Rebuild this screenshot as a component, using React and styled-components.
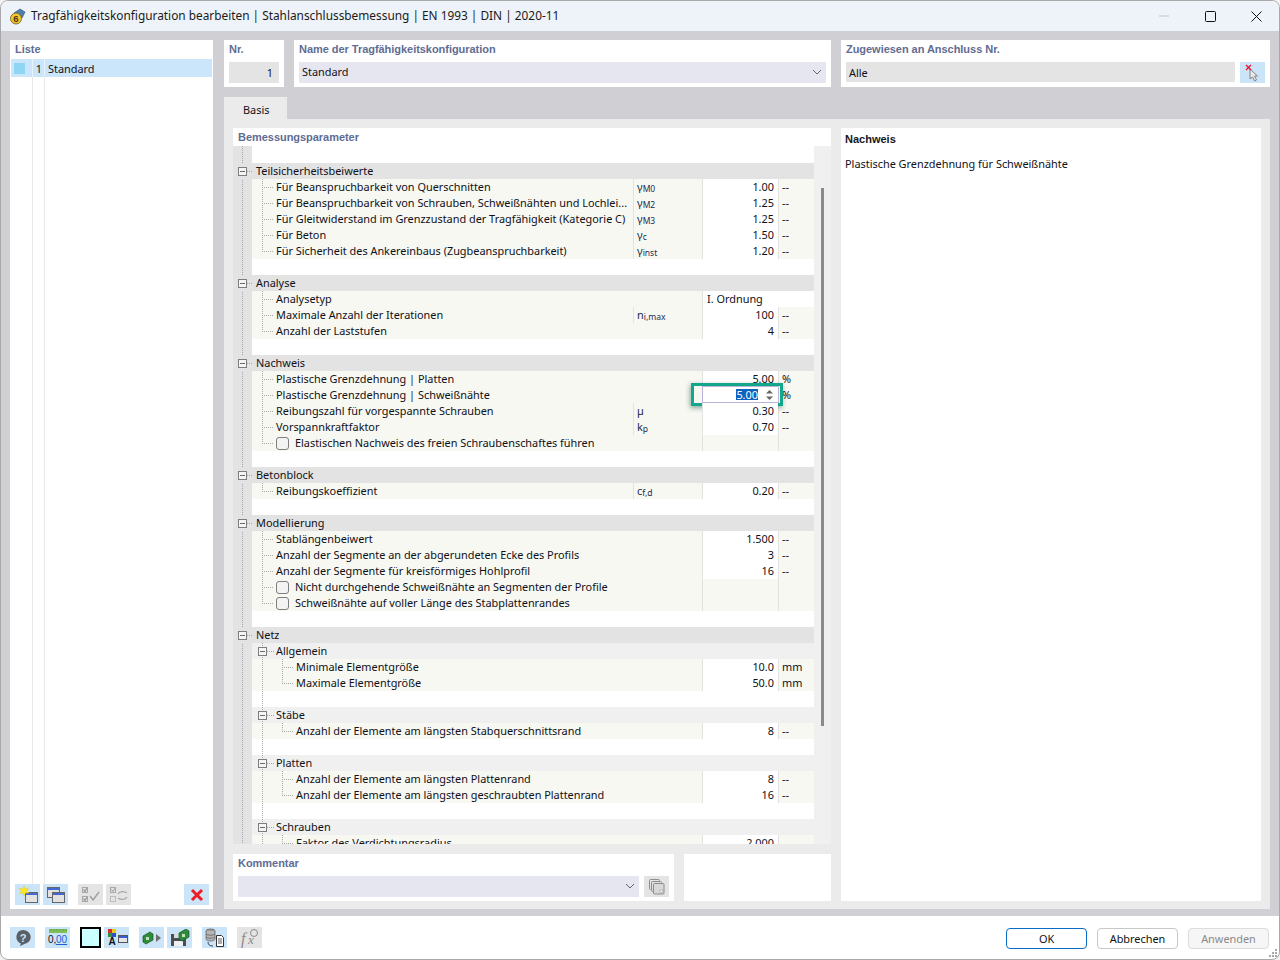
import React from 'react';
import styled, { createGlobalStyle } from 'styled-components';

const GlobalStyle = createGlobalStyle`
  html, body { margin: 0; padding: 0; height: 100%; background: #f2f2f2; }
  body { font-family: "Noto Sans", "Liberation Sans", sans-serif; font-size: 10.9px; color: #101018; }
  * { box-sizing: border-box; }
`;

const Win = styled.div`
  position: relative;
  width: 1280px;
  height: 960px;
  border: 1px solid #a9a9a9;
  border-radius: 8px;
  overflow: hidden;
  display: flex;
  flex-direction: column;
  background: #fff;
`;

const TitleBar = styled.div`
  height: 30px;
  flex: none;
  background: #eef3f9;
  display: flex;
  align-items: center;
  padding-left: 8px;
`;

const Title = styled.div`
  font-size: 11.85px;
  color: #1a1a1a;
  flex: 1;
  margin-left: 5px;
  padding-bottom: 2px;
`;

const WinBtn = styled.div`
  width: 46px;
  height: 30px;
  display: flex;
  align-items: center;
  justify-content: center;
`;

const Main = styled.div`
  flex: 1;
  min-height: 0;
  background: #d0cfd4;
  display: flex;
  gap: 11px;
  padding: 9px 9px 7px;
`;

const Panel = styled.div`
  background: #fff;
`;

const Heading = styled.div`
  font-family: "Liberation Sans", sans-serif;
  font-size: 11px;
  font-weight: 700;
  letter-spacing: -0.04px;
  color: #5f6c93;
  height: 18px;
  line-height: 19px;
  padding-left: 5px;
`;

const ListPanel = styled(Panel)`
  width: 203px;
  flex: none;
  display: flex;
  flex-direction: column;
`;

const ListHead = styled(Heading)`
  height: 19px;
`;

const ListBody = styled.div`
  flex: 1;
  margin: 0 1px;
  background:
    linear-gradient(#e8e8e8, #e8e8e8) 21px 0 / 1px 100% no-repeat,
    linear-gradient(#e8e8e8, #e8e8e8) 33px 0 / 1px 100% no-repeat;
`;

const ListRow = styled.div`
  height: 18px;
  background:
    linear-gradient(#e8f3fc, #e8f3fc) 21px 0 / 1px 100% no-repeat,
    linear-gradient(#e8f3fc, #e8f3fc) 33px 0 / 1px 100% no-repeat,
    #cbe6fb;
  display: flex;
  align-items: center;
  padding-left: 3px;
`;

const Swatch = styled.span`
  width: 11px;
  height: 11px;
  background: #8fd6f5;
`;

const ListNo = styled.span`
  width: 17px;
  text-align: right;
  margin-right: 6px;
`;

const ListTools = styled.div`
  height: 25px;
  flex: none;
  display: flex;
  padding-left: 5px;
`;

const IconBtn = styled.div`
  width: 25px;
  height: 21px;
  flex: none;
  margin-left: ${(p) => p.$gap ?? 0}px;
  background: ${(p) => (p.$off ? '#e4e4e4' : '#cbe4f8')};
  display: flex;
  align-items: center;
  justify-content: center;
`;

const Right = styled.div`
  flex: 1;
  min-width: 0;
  display: flex;
  flex-direction: column;
`;

const TopRow = styled.div`
  display: grid;
  grid-template-columns: 60px 537px 429px;
  gap: 10px;
  height: 47px;
  flex: none;
`;

const FieldRow = styled.div`
  display: flex;
  gap: 5px;
  padding: 4px 5px 0;
`;

const Field = styled.div`
  flex: 1;
  height: ${(p) => p.$h ?? 21}px;
  background: ${(p) => (p.$edit ? '#e6e6f0' : '#e4e4e4')};
  display: flex;
  align-items: center;
  justify-content: ${(p) => (p.$end ? 'flex-end' : 'space-between')};
  padding: 0 ${(p) => (p.$end ? 6 : 4)}px ${(p) => (p.$edit ? 2 : 0)}px 3px;
`;

const Tabs = styled.div`
  height: 22px;
  margin-top: 10px;
  flex: none;
`;

const Tab = styled.div`
  width: 63px;
  height: 22px;
  background: #ebebeb;
  line-height: 25px;
  padding-left: 19px;
`;

const TabBody = styled.div`
  flex: 1;
  min-height: 0;
  background: #ebebeb;
  padding: 9px 9px 8px;
  display: flex;
  gap: 10px;
`;

const LeftCol = styled.div`
  width: 598px;
  flex: none;
  display: flex;
  flex-direction: column;
  gap: 10px;
`;

const ParamPanel = styled(Panel)`
  flex: 1;
  min-height: 0;
  display: flex;
  flex-direction: column;
`;

const TreeWrap = styled.div`
  flex: 1;
  min-height: 0;
  display: flex;
`;

const Tree = styled.div`
  flex: 1;
  min-width: 0;
  overflow: hidden;
  background:
    repeating-linear-gradient(to bottom, #a8a8a8 0 1px, transparent 1px 2px) 9px 0 / 1px 100% no-repeat,
    linear-gradient(#e3e3e3, #e3e3e3) 0 0 / 19px 100% no-repeat;
  padding-top: 17px;
`;

const Track = styled.div`
  width: 17px;
  flex: none;
  background: #f0f0f0;
  padding: 42px 0 0 7px;
`;

const Thumb = styled.div`
  width: 3px;
  height: 538px;
  background: #8a8a8a;
`;

const Row = styled.div`
  height: 16px;
  display: flex;
  background: ${(p) => p.$bg || 'transparent'};
  line-height: 16px;
  white-space: nowrap;
`;

const Gutter = styled.div`
  width: 19px;
  flex: none;
  display: flex;
  align-items: center;
  background: repeating-linear-gradient(to right, #a8a8a8 0 1px, transparent 1px 2px) 14px 8px / ${(p) => (p.$dash ? 6 : 0)}px 1px no-repeat;
`;

const Toggle = styled.span`
  width: 9px;
  height: 9px;
  margin-left: ${(p) => p.$left}px;
  flex: none;
  border: 1px solid #7d7d7d;
  background: linear-gradient(#6a6a6a, #6a6a6a) center / 5px 1px no-repeat, #f4f4f4;
`;

const Cells = styled.div`
  flex: 1;
  display: grid;
  grid-template-columns: 381px 69px 76px 36px;
  grid-template-rows: 16px;
  background: #f7f8f2;
`;

const SubBody = styled.div`
  flex: 1;
  display: flex;
  background: #f0f0f0;
`;

const LabelCell = styled.div`
  display: flex;
  align-items: center;
  overflow: hidden;
  min-width: 0;
`;

const HeadLabel = styled(LabelCell)`
  padding-left: 4px;
`;

const Branch = styled.span`
  flex: none;
  height: 16px;
  width: ${(p) => p.$w}px;
  display: flex;
  align-items: center;
  background: ${(p) => p.$lines};
`;

const SymCell = styled.div`
  padding-left: 3px;
  color: #1c2a50;
  border-left: 1px solid ${(p) => (p.$line ? '#e2e2e2' : 'transparent')};
  & sub {
    font-size: 8.5px;
    line-height: 0;
    vertical-align: baseline;
    position: relative;
    top: 1px;
  }
`;

const ValCell = styled.div`
  position: relative;
  text-align: right;
  padding-right: 4px;
  background: ${(p) => (p.$empty ? 'transparent' : '#fff')};
  border-left: 1px solid #e2e2e2;
`;

const UnitCell = styled.div`
  padding-left: 3px;
  border-left: 1px solid #e2e2e2;
`;

const WideVal = styled.div`
  grid-column: 3 / 5;
  background: #fff;
  padding-left: 4px;
  border-left: 1px solid #e2e2e2;
`;

const CheckBox = styled.span`
  width: 13px;
  height: 13px;
  flex: none;
  margin-right: 6px;
  border: 1px solid #7f7f7f;
  border-radius: 3px;
  background: #f3f3f3;
`;

// Eingabefeld mit Markierung, liegt ueber der Wertespalte
const SpinInput = styled.div`
  position: absolute;
  inset: -1px -1px 0 -1px;
  border: 1px solid #b9b5da;
  background: #fff;
  display: flex;
  align-items: center;
  justify-content: flex-end;
  padding-right: 20px;
`;

const Selected = styled.span`
  background: #0a63c0;
  color: #fff;
  line-height: 11px;
  height: 11px;
  display: block;
`;

const Spin = styled.svg`
  position: absolute;
  right: 5px;
  top: 3px;
`;

const Marker = styled.div`
  position: absolute;
  left: -12px;
  right: -5px;
  top: -4px;
  bottom: -4px;
  border: 3px solid #12a68a;
  box-shadow: -1px 2px 5px rgba(10, 70, 50, 0.45);
  pointer-events: none;
`;

const BottomRow = styled.div`
  display: flex;
  gap: 10px;
  height: 47px;
  flex: none;
`;

const CommentPanel = styled(Panel)`
  width: 441px;
  flex: none;
`;

const EmptyPanel = styled(Panel)`
  flex: 1;
`;

const InfoPanel = styled(Panel)`
  flex: 1;
  padding: 4px;
`;

const InfoTitle = styled.div`
  font-family: "Liberation Sans", sans-serif;
  font-size: 11px;
  font-weight: 700;
  color: #16161e;
  line-height: 14px;
  margin-bottom: 10px;
`;

const Footer = styled.div`
  height: 43px;
  flex: none;
  display: flex;
  align-items: flex-start;
  padding: 11px 10px 0 9px;
`;

const ColorBox = styled.div`
  width: 21px;
  height: 21px;
  flex: none;
  margin-left: ${(p) => p.$gap}px;
  margin-right: 3px;
  border: 2px solid #000;
  background: #ccffff;
`;

const Spacer = styled.div`
  flex: 1;
`;

const DlgBtn = styled.div`
  width: 81px;
  height: 21px;
  margin-top: 1px;
  margin-left: ${(p) => p.$gap ?? 0}px;
  border: 1px solid ${(p) => (p.$primary ? '#0a6cc4' : p.$off ? '#dcdcdc' : '#c8c8c8')};
  border-radius: 4px;
  background: ${(p) => (p.$off ? '#f6f6f6' : '#fff')};
  color: ${(p) => (p.$off ? '#8a8a8a' : '#111')};
  text-align: center;
  line-height: 19px;
`;

const Grip = styled.svg`
  position: absolute;
  right: 2px;
  bottom: 1px;
`;

const Chevron = () => (
  <svg width="10" height="6" viewBox="0 0 10 6">
    <path d="M1 1l4 4 4-4" fill="none" stroke="#666" strokeWidth="1" />
  </svg>
);

const AppIcon = () => (
  <svg width="17" height="17" viewBox="0 0 17 17">
    <path d="M5 5L11 1l5 3-3 6z" fill="#4d7fb0" stroke="#2b4a6b" strokeWidth=".6" />
    <circle cx="7" cy="10.5" r="5.5" fill="#f2c531" stroke="#6c5a20" strokeWidth=".8" />
    <text x="7" y="14" fontSize="9.5" fontWeight="700" textAnchor="middle" fill="#4a3b10" fontFamily="Liberation Sans">6</text>
  </svg>
);

const MiniWin = ({ x = 0, y = 0 }) => (
  <g transform={`translate(${x} ${y})`}>
    <rect x=".5" y=".5" width="12" height="10" fill="#e2e2e2" stroke="#666" />
    <rect x="1" y="1" width="11" height="2" fill="#4468d2" />
  </g>
);

const NewIcon = () => (
  <svg width="20" height="18" viewBox="0 0 20 18">
    <MiniWin x={7} y={6} />
    <path d="M6 0l1.2 3.2L10.5 2 8.6 5l2.4 2-3.3-.2L6 10 4.8 6.8 1.500 7.500l2-2.500L1 2.500l3.500.5z" fill="#ffe81f" stroke="#e2c400" strokeWidth=".4" />
  </svg>
);

const CopyIcon = () => (
  <svg width="20" height="18" viewBox="0 0 20 18">
    <MiniWin x={1} y={1} />
    <MiniWin x={6} y={6} />
  </svg>
);

const CheckAllIcon = () => (
  <svg width="20" height="18" viewBox="0 0 20 18">
    <rect x="1.500" y="1.500" width="5" height="5" fill="none" stroke="#a8a8a8" />
    <rect x="1.500" y="10.500" width="5" height="5" fill="none" stroke="#a8a8a8" />
    <path d="M2.500 3.500l1.500 2L6 2M2.500 12.500l1.500 2L6 11M9 10l3 4 6-8" fill="none" stroke="#a0a0a0" strokeWidth="1.400" />
  </svg>
);

const InvertIcon = () => (
  <svg width="20" height="18" viewBox="0 0 20 18">
    <rect x="1.500" y="1.500" width="5" height="5" fill="none" stroke="#a8a8a8" />
    <rect x="1.500" y="10.500" width="5" height="5" fill="none" stroke="#bdbdbd" />
    <path d="M2.500 3.500l1.500 2L6 2" fill="none" stroke="#a0a0a0" />
    <path d="M9 8c2-3 6-3 9-1M18 11c-2 3-6 3-9 1" fill="none" stroke="#a8a8a8" strokeWidth="1.300" />
  </svg>
);

const DeleteIcon = () => (
  <svg width="14" height="14" viewBox="0 0 14 14">
    <path d="M2 2l10 10M12 2L2 12" stroke="#ee1c25" strokeWidth="3" />
  </svg>
);

const PickIcon = () => (
  <svg width="16" height="18" viewBox="0 0 16 18">
    <path d="M5 5l0 10 2.500-2 2 4 2-1-2-4h3z" fill="#e8e8e8" stroke="#7b7b7b" strokeWidth=".9" />
    <path d="M1 1l5 5M6 1L1 6" stroke="#e8112d" strokeWidth="1.300" />
  </svg>
);

const StackIcon = () => (
  <svg width="16" height="16" viewBox="0 0 16 16">
    <rect x=".5" y=".5" width="10" height="10" rx="1" fill="none" stroke="#8d8d8d" />
    <rect x="2.500" y="2.500" width="10" height="10" rx="1" fill="#dedede" stroke="#8d8d8d" />
    <rect x="4.500" y="4.500" width="10.500" height="10.500" rx="1" fill="#d8d8d8" stroke="#8d8d8d" />
    <rect x="11" y="11" width="2.500" height="2.500" fill="#fff" stroke="#8d8d8d" strokeWidth=".5" />
  </svg>
);

const HelpIcon = () => (
  <svg width="18" height="18" viewBox="0 0 18 18">
    <path d="M9 1a7.500 7 0 0 1 2 13.800L6 17l.8-2.500A7 7 0 0 1 9 1z" fill="#5a6068" />
    <text x="9" y="12.500" fontSize="11" fontWeight="700" textAnchor="middle" fill="#cbe4f8" fontFamily="Liberation Sans">?</text>
  </svg>
);

const DecimalIcon = () => (
  <svg width="22" height="19" viewBox="0 0 22 19">
    <rect x="2" y="1" width="18" height="4" fill="#7fbf5a" />
    <path d="M4 1v2M7 1v2M10 1v2M13 1v2M16 1v2M19 1v2" stroke="#4c8a33" strokeWidth=".6" />
    <text x="1" y="15" fontSize="10" fontFamily="Liberation Sans" fill="#111">0,</text>
    <text x="9" y="15" fontSize="10" fontFamily="Liberation Sans" fill="#1d5fd0" textDecoration="underline">00</text>
  </svg>
);

const LegendIcon = () => (
  <svg width="22" height="20" viewBox="0 0 22 20">
    <rect x="2" y="1" width="4" height="4" fill="#d42b2b" />
    <rect x="6" y="1" width="4" height="4" fill="#e8c81e" />
    <rect x="2" y="5" width="4" height="4" fill="#2f8f3c" />
    <rect x="6" y="5" width="4" height="4" fill="#2f4fc8" />
    <text x="6" y="17" fontSize="10" fontWeight="700" textAnchor="middle" fontFamily="Liberation Sans" fill="#111">A</text>
    <rect x="12.500" y="7.500" width="9" height="7" fill="#e4e4e4" stroke="#555" />
    <rect x="13" y="8" width="8" height="2" fill="#3a5ed0" />
  </svg>
);

const Cube = ({ x = 0, y = 0 }) => (
  <g transform={`translate(${x} ${y})`}>
    <path d="M0 4l7-4 3 2v6l-7 4-3-2z" fill="#2f8a3c" stroke="#1c5a26" strokeWidth=".7" />
    <rect x="3" y="5" width="3" height="3" fill="#bfe3c0" />
  </g>
);

const ExportIcon = () => (
  <svg width="20" height="16" viewBox="0 0 20 16">
    <Cube x={1} y={2} />
    <path d="M14 4l5 4-5 4z" fill="#6f6f6f" />
  </svg>
);

const SaveIcon = () => (
  <svg width="20" height="18" viewBox="0 0 20 18">
    <path d="M1 5h13l2 2v10H1z" fill="#4a4f55" />
    <rect x="4" y="5" width="7" height="4" fill="#d9dde0" />
    <rect x="4" y="12" width="9" height="5" fill="#eef0f2" />
    <Cube x={9} y={0} />
  </svg>
);

const DbIcon = () => (
  <svg width="20" height="20" viewBox="0 0 20 20">
    <ellipse cx="5.500" cy="3" rx="4.500" ry="2" fill="#9a9a9a" stroke="#555" strokeWidth=".7" />
    <path d="M1 3v8c0 1.300 2 2 4.500 2S10 12.300 10 11V3" fill="#b5b5b5" stroke="#555" strokeWidth=".7" />
    <path d="M1 6c1 1.600 8 1.600 9 0M1 9c1 1.600 8 1.600 9 0" fill="none" stroke="#555" strokeWidth=".7" />
    <path d="M3 14c0 3 2 4 5 4" fill="none" stroke="#333" strokeWidth=".9" />
    <path d="M11.500 7.500h5l2 2v9h-7z" fill="#fff" stroke="#333" />
    <path d="M13 11h4M13 13h4M13 15h4" stroke="#333" strokeWidth=".8" />
  </svg>
);

const FormulaIcon = () => (
  <svg width="22" height="20" viewBox="0 0 22 20">
    <text x="2" y="16" fontSize="16" fontStyle="italic" fontFamily="Liberation Serif" fill="#8a8a8a">f</text>
    <text x="9" y="16" fontSize="13" fontStyle="italic" fontFamily="Liberation Serif" fill="#8a8a8a">x</text>
    <circle cx="15" cy="5" r="3.500" fill="none" stroke="#8a8a8a" />
  </svg>
);

const dots = '#a8a8a8 0 1px, transparent 1px 2px';
const vLine = (x, h = '100%') => `repeating-linear-gradient(to bottom, ${dots}) ${x}px 0 / 1px ${h} no-repeat`;
const hLine = (x, w) => `repeating-linear-gradient(to right, ${dots}) ${x}px 8px / ${w}px 1px no-repeat`;

const item = (label, val, unit, extra = {}) => ({ kind: 'item', label, val, unit, ...extra });
const blank = { kind: 'blank' };

const rows = [
  { kind: 'head', label: 'Teilsicherheitsbeiwerte' },
  item('Für Beanspruchbarkeit von Querschnitten', '1.00', '--', { sym: 'γ', sub: 'M0' }),
  item('Für Beanspruchbarkeit von Schrauben, Schweißnähten und Lochlei...', '1.25', '--', { sym: 'γ', sub: 'M2' }),
  item('Für Gleitwiderstand im Grenzzustand der Tragfähigkeit (Kategorie C)', '1.25', '--', { sym: 'γ', sub: 'M3' }),
  item('Für Beton', '1.50', '--', { sym: 'γ', sub: 'c' }),
  item('Für Sicherheit des Ankereinbaus (Zugbeanspruchbarkeit)', '1.20', '--', { sym: 'γ', sub: 'inst', last: true }),
  blank,
  { kind: 'head', label: 'Analyse' },
  item('Analysetyp', null, null, { wide: 'I. Ordnung' }),
  item('Maximale Anzahl der Iterationen', '100', '--', { sym: 'n', sub: 'i,max' }),
  item('Anzahl der Laststufen', '4', '--', { last: true }),
  blank,
  { kind: 'head', label: 'Nachweis' },
  item('Plastische Grenzdehnung | Platten', '5.00', '%'),
  item('Plastische Grenzdehnung | Schweißnähte', '5.00', '%', { editing: true }),
  item('Reibungszahl für vorgespannte Schrauben', '0.30', '--', { sym: 'µ' }),
  item('Vorspannkraftfaktor', '0.70', '--', { sym: 'k', sub: 'p' }),
  item('Elastischen Nachweis des freien Schraubenschaftes führen', null, null, { check: true, last: true }),
  blank,
  { kind: 'head', label: 'Betonblock' },
  item('Reibungskoeffizient', '0.20', '--', { sym: 'c', sub: 'f,d', last: true }),
  blank,
  { kind: 'head', label: 'Modellierung' },
  item('Stablängenbeiwert', '1.500', '--'),
  item('Anzahl der Segmente an der abgerundeten Ecke des Profils', '3', '--'),
  item('Anzahl der Segmente für kreisförmiges Hohlprofil', '16', '--'),
  item('Nicht durchgehende Schweißnähte an Segmenten der Profile', null, null, { check: true }),
  item('Schweißnähte auf voller Länge des Stabplattenrandes', null, null, { check: true, last: true }),
  blank,
  { kind: 'head', label: 'Netz' },
  { kind: 'sub', label: 'Allgemein' },
  item('Minimale Elementgröße', '10.0', 'mm', { deep: true }),
  item('Maximale Elementgröße', '50.0', 'mm', { deep: true, last: true }),
  { kind: 'gap' },
  { kind: 'sub', label: 'Stäbe' },
  item('Anzahl der Elemente am längsten Stabquerschnittsrand', '8', '--', { deep: true, last: true }),
  { kind: 'gap' },
  { kind: 'sub', label: 'Platten' },
  item('Anzahl der Elemente am längsten Plattenrand', '8', '--', { deep: true }),
  item('Anzahl der Elemente am längsten geschraubten Plattenrand', '16', '--', { deep: true, last: true }),
  { kind: 'gap' },
  { kind: 'sub', label: 'Schrauben' },
  item('Faktor des Verdichtungsradius', '2.000', '', { deep: true }),
];

function ItemRow({ row }) {
  const end = row.last ? '9px' : '100%';
  const lines = row.deep
    ? [vLine(10), vLine(30, end), hLine(30, 12)].join(',')
    : [vLine(10, end), hLine(10, 12)].join(',');
  return (
    <Row>
      <Gutter />
      <Cells>
        <LabelCell>
          <Branch $w={row.deep ? 44 : 24} $lines={lines} />
          {row.check && <CheckBox />}
          {row.label}
        </LabelCell>
        <SymCell $line={!!row.sym}>
          {row.sym}
          {row.sub && <sub>{row.sub}</sub>}
        </SymCell>
        {row.wide ? (
          <WideVal>{row.wide}</WideVal>
        ) : (
          <>
            <ValCell $empty={!row.val}>
              {row.editing ? (
                <SpinInput>
                  <Selected>{row.val}</Selected>
                  <Spin width="7" height="10" viewBox="0 0 7 10">
                    <path d="M3.500 0L7 3.500H0zM3.500 10L0 6.500h7z" fill="#666" />
                  </Spin>
                  <Marker />
                </SpinInput>
              ) : (
                row.val
              )}
            </ValCell>
            <UnitCell>{row.unit}</UnitCell>
          </>
        )}
      </Cells>
    </Row>
  );
}

function TreeRow({ row }) {
  if (row.kind === 'blank') return <Row />;
  if (row.kind === 'gap') {
    return (
      <Row>
        <Gutter />
        <Branch $w={24} $lines={vLine(10)} />
      </Row>
    );
  }
  if (row.kind === 'head') {
    return (
      <Row $bg="#e3e3e3">
        <Gutter $dash>
          <Toggle $left={5} />
        </Gutter>
        <HeadLabel>{row.label}</HeadLabel>
      </Row>
    );
  }
  if (row.kind === 'sub') {
    return (
      <Row>
        <Gutter />
        <SubBody>
          <Branch $w={24} $lines={[vLine(10), hLine(15, 7)].join(',')}>
            <Toggle $left={6} />
          </Branch>
          <LabelCell>{row.label}</LabelCell>
        </SubBody>
      </Row>
    );
  }
  return <ItemRow row={row} />;
}

export default function App() {
  return (
    <>
      <GlobalStyle />
      <Win>
        <TitleBar>
          <AppIcon />
          <Title>Tragfähigkeitskonfiguration bearbeiten | Stahlanschlussbemessung | EN 1993 | DIN | 2020-11</Title>
          <WinBtn>
            <svg width="10" height="2" viewBox="0 0 10 2"><path d="M0 1h10" stroke="#c4c4c4" /></svg>
          </WinBtn>
          <WinBtn>
            <svg width="11" height="11" viewBox="0 0 11 11"><rect x=".5" y=".5" width="10" height="10" rx="1" fill="none" stroke="#111" /></svg>
          </WinBtn>
          <WinBtn>
            <svg width="11" height="11" viewBox="0 0 11 11"><path d="M.5.5l10 10M10.500.5l-10 10" stroke="#111" /></svg>
          </WinBtn>
        </TitleBar>
        <Main>
          <ListPanel>
            <ListHead>Liste</ListHead>
            <ListBody>
              <ListRow>
                <Swatch />
                <ListNo>1</ListNo>
                Standard
              </ListRow>
            </ListBody>
            <ListTools>
              <IconBtn><NewIcon /></IconBtn>
              <IconBtn $gap={3}><CopyIcon /></IconBtn>
              <IconBtn $gap={10} $off><CheckAllIcon /></IconBtn>
              <IconBtn $gap={3} $off><InvertIcon /></IconBtn>
              <IconBtn $gap={53}><DeleteIcon /></IconBtn>
            </ListTools>
          </ListPanel>
          <Right>
            <TopRow>
              <Panel>
                <Heading>Nr.</Heading>
                <FieldRow><Field $end>1</Field></FieldRow>
              </Panel>
              <Panel>
                <Heading>Name der Tragfähigkeitskonfiguration</Heading>
                <FieldRow>
                  <Field $edit>Standard<Chevron /></Field>
                </FieldRow>
              </Panel>
              <Panel>
                <Heading>Zugewiesen an Anschluss Nr.</Heading>
                <FieldRow>
                  <Field $h={20}>Alle</Field>
                  <IconBtn><PickIcon /></IconBtn>
                </FieldRow>
              </Panel>
            </TopRow>
            <Tabs><Tab>Basis</Tab></Tabs>
            <TabBody>
              <LeftCol>
                <ParamPanel>
                  <Heading>Bemessungsparameter</Heading>
                  <TreeWrap>
                    <Tree>
                      {rows.map((row, i) => <TreeRow key={i} row={row} />)}
                    </Tree>
                    <Track><Thumb /></Track>
                  </TreeWrap>
                </ParamPanel>
                <BottomRow>
                  <CommentPanel>
                    <Heading>Kommentar</Heading>
                    <FieldRow>
                      <Field $edit>&nbsp;<Chevron /></Field>
                      <IconBtn $off><StackIcon /></IconBtn>
                    </FieldRow>
                  </CommentPanel>
                  <EmptyPanel />
                </BottomRow>
              </LeftCol>
              <InfoPanel>
                <InfoTitle>Nachweis</InfoTitle>
                Plastische Grenzdehnung für Schweißnähte
              </InfoPanel>
            </TabBody>
          </Right>
        </Main>
        <Footer>
          <IconBtn><HelpIcon /></IconBtn>
          <IconBtn $gap={10}><DecimalIcon /></IconBtn>
          <ColorBox $gap={10} />
          <IconBtn><LegendIcon /></IconBtn>
          <IconBtn $gap={10}><ExportIcon /></IconBtn>
          <IconBtn $gap={3}><SaveIcon /></IconBtn>
          <IconBtn $gap={10}><DbIcon /></IconBtn>
          <IconBtn $gap={10} $off><FormulaIcon /></IconBtn>
          <Spacer />
          <DlgBtn $primary>OK</DlgBtn>
          <DlgBtn $gap={10}>Abbrechen</DlgBtn>
          <DlgBtn $gap={10} $off>Anwenden</DlgBtn>
        </Footer>
        <Grip width="10" height="9" viewBox="0 0 10 9">
          <path d="M8 0h2v2H8zM5 3h2v2H5zM8 3h2v2H8zM2 6h2v2H2zM5 6h2v2H5zM8 6h2v2H8z" fill="#a8a8a8" />
        </Grip>
      </Win>
    </>
  );
}
